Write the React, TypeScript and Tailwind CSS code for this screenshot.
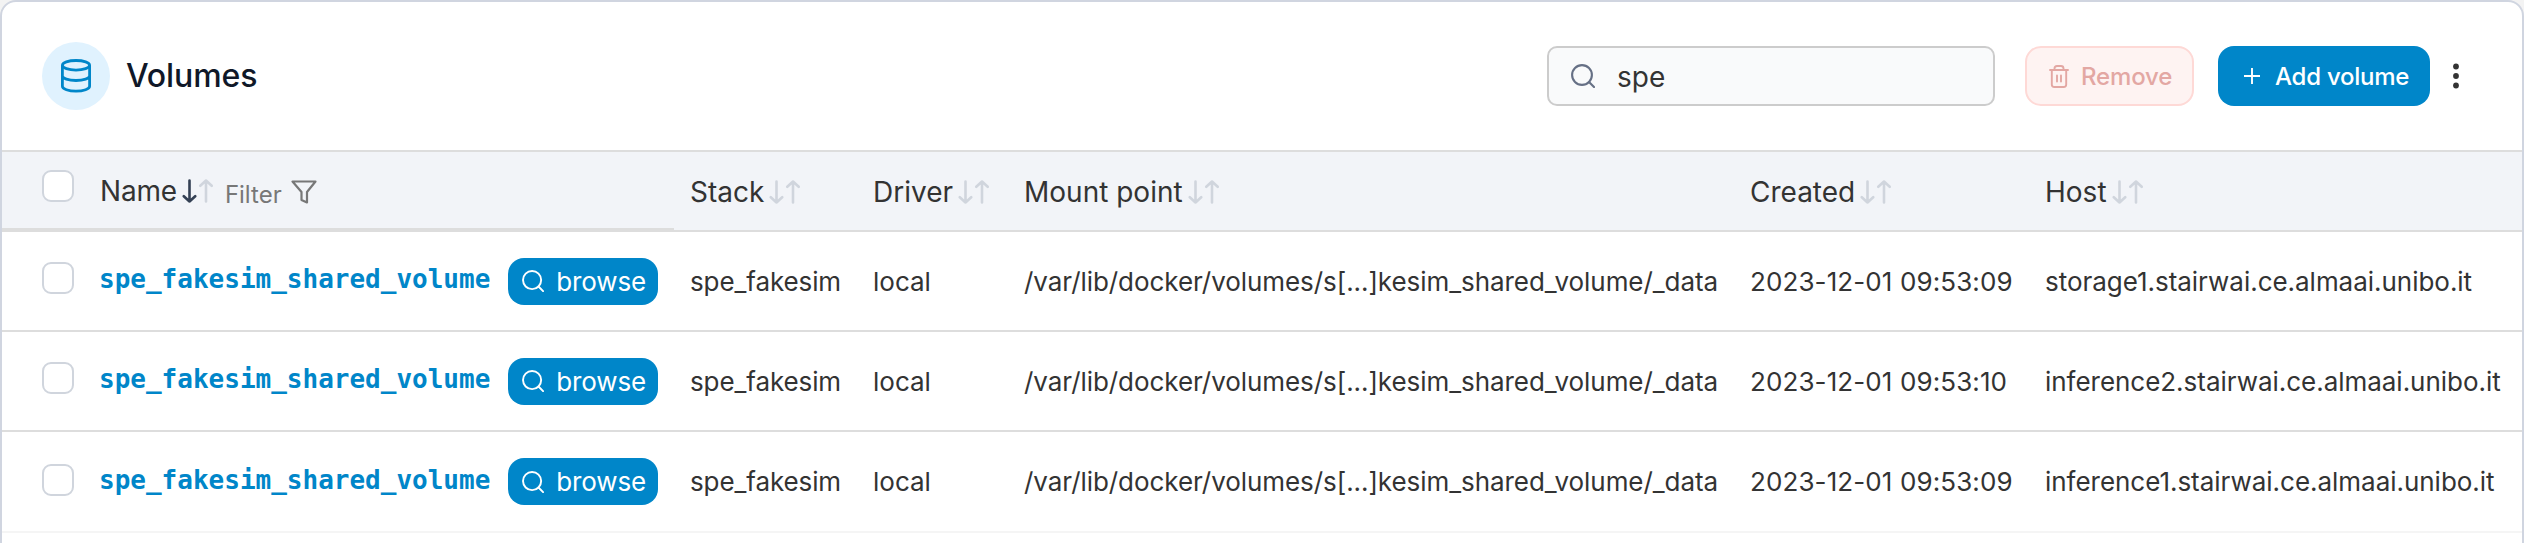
import React from "react";

type Volume = { created: string; host: string; name: string };

const volumes: Volume[] = [
  { name: "spe_fakesim_shared_volume", created: "2023-12-01 09:53:09", host: "storage1.stairwai.ce.almaai.unibo.it" },
  { name: "spe_fakesim_shared_volume", created: "2023-12-01 09:53:10", host: "inference2.stairwai.ce.almaai.unibo.it" },
  { name: "spe_fakesim_shared_volume", created: "2023-12-01 09:53:09", host: "inference1.stairwai.ce.almaai.unibo.it" },
];

const columns = "grid grid-cols-[97px_575px_183px_151px_726px_295px_1fr]";

function SearchIcon({ className }: { className: string }) {
  return (
    <svg viewBox="0 0 24 24" fill="none" stroke="currentColor" strokeWidth="2.1" className={className}>
      <circle cx="11" cy="11" r="9.900" />
      <path d="M18 18l5 5" strokeLinecap="round" />
    </svg>
  );
}

function SortArrows({ active = false }: { active?: boolean }) {
  return (
    <svg viewBox="0 0 32 24" fill="none" strokeWidth="2.6" strokeLinecap="round" strokeLinejoin="round" className="ml-[4px] h-6 w-8 shrink-0">
      <path d="M8.500 1.500v21M2.800 17.200L8.500 22.500L14.200 17.200" stroke={active ? "#344054" : "#d0d5dd"} />
      <path d="M25 22.500V1.500M19.300 6.800L25 1.500L30.700 6.800" stroke="#d0d5dd" />
    </svg>
  );
}

function Checkbox() {
  return <span className="block size-8 rounded-[9px] border-2 border-[#d0d5dd] bg-white" />;
}

function HeaderCell({ label }: { label: string }) {
  return (
    <div className="flex items-center pl-4 pt-px text-[28px] leading-[40px]">
      <span>{label}</span>
      <SortArrows />
    </div>
  );
}

export default function App() {
  return (
    <div className="h-[543px] w-full overflow-hidden bg-[#f3f3f3] font-['Inter',sans-serif] text-[#333333]">
      <div className="h-[563px] rounded-2xl border-2 border-[#d0d5e0] bg-white">
        <header className="flex h-[148px] items-center pl-10 pr-[63px]">
          <div className="flex size-[68px] items-center justify-center rounded-full bg-[#e0f2fe]">
            <svg viewBox="0 0 30 34" fill="none" stroke="#0086c9" strokeWidth="2.800" className="h-[34px] w-[30px]">
              <ellipse cx="15" cy="6.300" rx="13.600" ry="4.800" />
              <path d="M1.400 6.300v21c0 2.600 6.100 4.900 13.600 4.900s13.600-2.300 13.600-4.900v-21M1.400 16.800c0 2.600 6.100 4.700 13.600 4.700s13.600-2.100 13.600-4.700" />
            </svg>
          </div>
          <h1 className="ml-4 text-[32px] font-medium leading-10 tracking-[-0.1px] text-[#101828]">Volumes</h1>
          <div className="ml-auto flex h-[60px] w-[448px] items-center rounded-[10px] border-2 border-[#cccccc] bg-[#f9fafb] pl-[22px]">
            <SearchIcon className="size-6 text-[#667085]" />
            <span className="ml-[22px] pt-0.5 text-[28px] leading-10">spe</span>
          </div>
          <div className="ml-[30px] flex h-[60px] w-[169px] items-center rounded-2xl border-2 border-[#fed9d6] bg-[#fef3f2] pl-[22px] text-[#e3a7a3]">
            <svg viewBox="0 0 20 23" fill="none" stroke="currentColor" strokeWidth="1.900" strokeLinejoin="round" strokeLinecap="round" className="h-[23px] w-5">
              <path d="M1 5h18M5.500 5V3.500q0-2.500 2.500-2.500h4q2.500 0 2.500 2.500V5M2.800 5v14.500q0 2.500 2.500 2.500h9.400q2.500 0 2.500-2.500V5M8 10.500v6M12 10.500v6" />
            </svg>
            <span className="ml-3 pt-px text-[24px] font-medium leading-9 tracking-[-0.15px]">Remove</span>
          </div>
          <div className="ml-6 flex h-[60px] w-[212px] items-center rounded-2xl bg-[#0086c9] pl-[26px] text-white">
            <svg viewBox="0 0 16 16" stroke="currentColor" strokeWidth="1.900" className="size-4">
              <path d="M8 0v16M0 8h16" />
            </svg>
            <span className="ml-[15px] pt-px text-[24px] font-medium leading-9 tracking-[-0.25px]">Add volume</span>
          </div>
          <svg viewBox="0 0 6 26" fill="#333333" className="ml-[23px] h-[26px] w-[6px] overflow-visible">
            <circle cx="3" cy="3.500" r="2.900" />
            <circle cx="3" cy="13" r="2.900" />
            <circle cx="3" cy="22.500" r="2.900" />
          </svg>
        </header>

        <div className={`${columns} h-[82px] border-y-2 border-[#dddddd] bg-[#f2f4f8]`}>
          <div className="border-b-2 border-[#dddddd] pl-10 pt-[18px]">
            <Checkbox />
          </div>
          <div className="flex items-center border-b-2 border-[#dddddd] pl-px pt-px text-[28px] leading-10">
            <span className="tracking-[-0.2px]">Name</span>
            <SortArrows active />
            <span className="ml-3 pt-[9px] text-[24px] leading-[34px] text-[#777777]">Filter</span>
            <svg viewBox="0 0 26 24" fill="none" stroke="#777777" strokeWidth="2.200" strokeLinejoin="round" className="ml-[9px] mt-[3px] h-6 w-[26px]">
              <path d="M1.500 1.500h23L16 12v10.500L10.500 20v-8Z" />
            </svg>
          </div>
          <HeaderCell label="Stack" />
          <HeaderCell label="Driver" />
          <HeaderCell label="Mount point" />
          <HeaderCell label="Created" />
          <HeaderCell label="Host" />
        </div>

        {volumes.map((v, i) => (
          <div
            key={v.host}
            className={`${columns} items-center text-[26px] leading-9 ${i === 2 ? "h-[101px] border-b-2 border-[#f5f5f5]" : "h-[100px] border-b-2 border-[#dddddd]"}`}
          >
            <div className={i === 2 ? "pb-1 pl-10" : "pb-[6px] pl-10"}>
              <Checkbox />
            </div>
            <div className="flex items-center">
              <span className="pb-1 font-['DejaVu_Sans_Mono',monospace] font-bold text-[#0086c9]">{v.name}</span>
              <span className="ml-[18px] flex h-[47px] w-[150px] items-center rounded-2xl bg-[#0086c9] pl-[14px] text-white">
                <SearchIcon className="size-[22px]" />
                <span className="ml-3 pt-px tracking-[-0.15px]">browse</span>
              </span>
            </div>
            <div className="pl-4 pt-px tracking-[-0.1px]">spe_fakesim</div>
            <div className="pl-4 pt-px">local</div>
            <div className="pl-4 pt-px tracking-[-0.06px]">/var/lib/docker/volumes/s[...]kesim_shared_volume/_data</div>
            <div className="pl-4 pt-px tracking-[0.1px]">{v.created}</div>
            <div className="whitespace-nowrap pl-4 pt-px tracking-[-0.03px]">{v.host}</div>
          </div>
        ))}
      </div>
    </div>
  );
}
